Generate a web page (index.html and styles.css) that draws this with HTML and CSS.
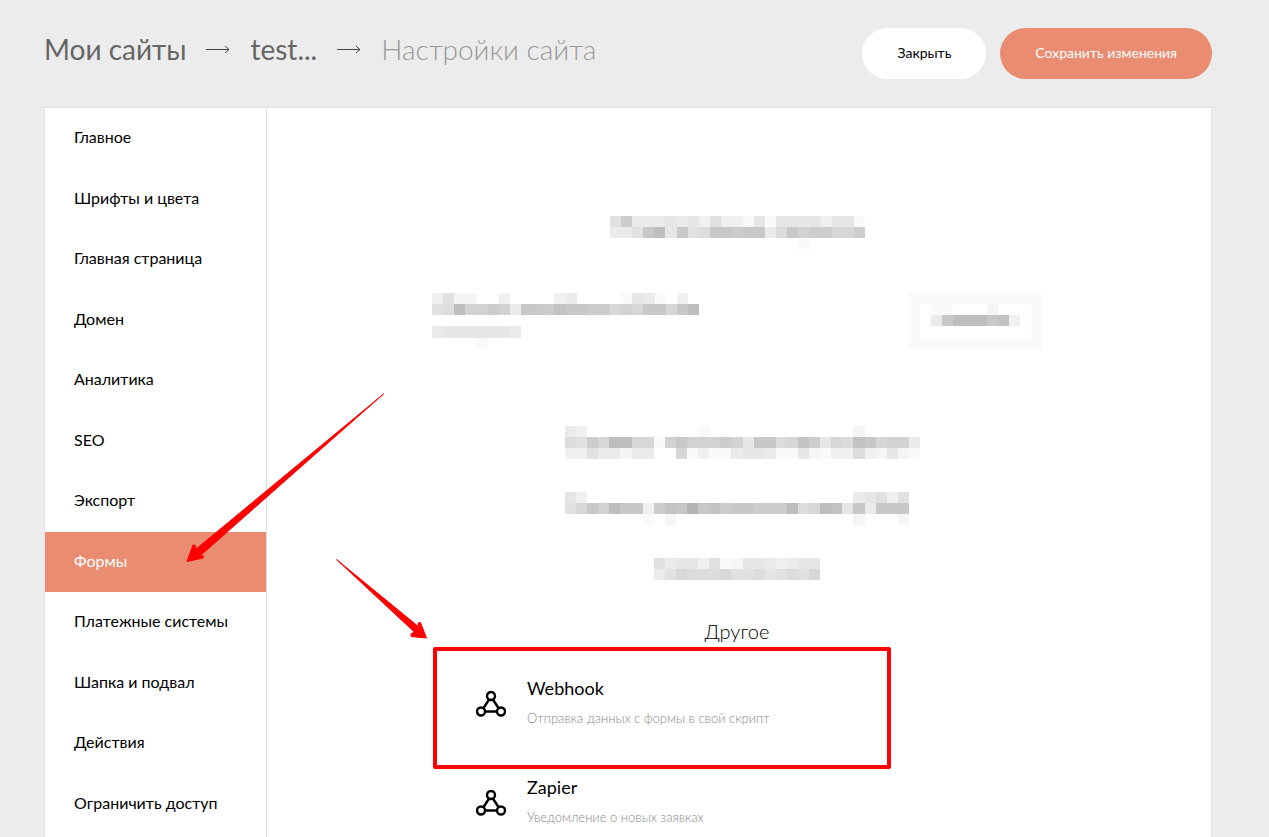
FILE: index.html
```html
<!DOCTYPE html>
<html lang="ru">
<head>
    <meta charset="UTF-8">
    <meta name="viewport" content="width=device-width, initial-scale=1.0">
    <title>Настройки сайта</title>
    <link rel="stylesheet" href="styles.css">
</head>
<body>
    <header class="header">
        <nav class="breadcrumbs">
            <a href="#">Мои сайты</a>
            <svg class="crumb-arrow" viewBox="0 0 24 10"><path d="M0 5.5H23M19 2L23 5.5L19 9"/></svg>
            <a href="#">test...</a>
            <svg class="crumb-arrow" viewBox="0 0 24 10"><path d="M0 5.5H23M19 2L23 5.5L19 9"/></svg>
            <span class="current">Настройки сайта</span>
        </nav>
        <div class="buttons">
            <button class="close" type="button">Закрыть</button>
            <button class="save" type="button">Сохранить изменения</button>
        </div>
    </header>

    <div class="card">
        <nav class="sidebar">
            <a href="#">Главное</a>
            <a href="#">Шрифты и цвета</a>
            <a href="#">Главная страница</a>
            <a href="#">Домен</a>
            <a href="#">Аналитика</a>
            <a href="#">SEO</a>
            <a href="#">Экспорт</a>
            <a href="#" class="active">Формы</a>
            <a href="#">Платежные системы</a>
            <a href="#">Шапка и подвал</a>
            <a href="#">Действия</a>
            <a href="#">Ограничить доступ</a>
        </nav>

        <main class="content">
            <svg class="mosaic mosaic-title" data-rows="6a444545363315155553551 446bd5b67bbabb47b9aa88a 00000000000000000100000"></svg>

            <div class="connected">
                <svg class="mosaic mosaic-name" data-rows="362200300003400001541030 67d99a94bbacbbaa898bb8bd 0 45555554 00001"></svg>
                <svg class="mosaic mosaic-button" data-rows="111111111111 101100020001 104bdddbc301 100000000001 111111111111"></svg>
            </div>

            <svg class="mosaic mosaic-text" data-rows="43000000000010000000000000200000 76a8dd8819b999a95bb78ca587cb8994 33644244008131145541152133732521"></svg>
            <svg class="mosaic mosaic-text" data-rows="53000000000000000000000000456360 68b9dbb3acbfbcabbaaad78dc5b4bbb0 00000001020000000000000000200020"></svg>
            <svg class="mosaic mosaic-small" data-rows="645536125543455 468777866756768"></svg>

            <h2>Другое</h2>
            <div class="service marked">
                <svg class="service-icon" viewBox="0 0 30 26"><path d="M12.8 9L7.2 17.5M17.2 9L22.8 17.5M9.5 20.5H20.5"/><circle cx="15" cy="5" r="4"/><circle cx="5" cy="20.5" r="4"/><circle cx="25" cy="20.5" r="4"/></svg>
                <div>
                    <h3>Webhook</h3>
                    <p>Отправка данных с формы в свой скрипт</p>
                </div>
            </div>
            <div class="service">
                <svg class="service-icon" viewBox="0 0 30 26"><path d="M12.8 9L7.2 17.5M17.2 9L22.8 17.5M9.5 20.5H20.5"/><circle cx="15" cy="5" r="4"/><circle cx="5" cy="20.5" r="4"/><circle cx="25" cy="20.5" r="4"/></svg>
                <div>
                    <h3>Zapier</h3>
                    <p>Уведомление о новых заявках</p>
                </div>
            </div>
        </main>

        <!-- красные стрелки-подсказки -->
        <svg class="pointers" viewBox="0 0 400 540">
            <path d="M338.5 286L155.5 447.5L158.5 448L158 450L142 453.5L148 437L150.5 437.5L150.5 441.5Z"/>
            <path d="M291.5 451.5L373.7 518.8L373 515L375.5 514.5L381.5 530L366 528.5L366 526L369.3 524Z"/>
        </svg>
    </div>

    <script src="script.js"></script>
</body>
</html>
```
FILE: styles.css
```css
* {
    box-sizing: border-box;
}

body {
    display: flex;
    flex-direction: column;
    min-height: 100vh;
    margin: 0;
    background-color: #ececec;
    color: #000;
    font-family: Lato, 'Open Sans', sans-serif;
}

a {
    color: inherit;
    text-decoration: none;
}

h2, h3, p {
    margin: 0;
    font-weight: 400;
}

.header {
    display: flex;
    justify-content: space-between;
    align-items: flex-start;
    height: 107px;
    padding: 28px 57px 0 44px;
}

.breadcrumbs {
    display: flex;
    align-items: center;
    gap: 20px;
    color: #666;
    font-size: 28px;
    line-height: 42px;
}

.breadcrumbs .current {
    color: #999;
    font-weight: 300;
}

.crumb-arrow {
    width: 24px;
    height: 10px;
    fill: none;
    stroke: #444;
}

.buttons {
    display: flex;
    gap: 14px;
}

.buttons button {
    height: 51px;
    padding: 0 35px 3px;
    border: none;
    border-radius: 26px;
    cursor: pointer;
    font-family: inherit;
    font-size: 14px;
}

.buttons .close {
    background-color: #fff;
    color: #000;
}

.buttons .save {
    background-color: #ea8c71;
    color: #fff;
}

.card {
    position: relative;
    display: flex;
    flex: 1;
    margin: 0 57px 0 44px;
    border: 1px solid #e2e2e2;
    border-bottom: none;
    background-color: #fff;
}

.sidebar {
    display: flex;
    flex-direction: column;
    width: 222px;
    padding-bottom: 3px;
    border-right: 1px solid #ddd;
    font-size: 16px;
}

.sidebar a {
    display: flex;
    flex: 1;
    align-items: center;
    padding: 0 0 3px 29px;
}

.sidebar .active {
    background-color: #ea8c71;
    color: #fff;
}

.content {
    display: flex;
    flex: 1;
    flex-direction: column;
    align-items: center;
    padding: 108px 4px 0 0;
}

.mosaic {
    display: block;
    shape-rendering: crispEdges;
}

.mosaic-title {
    width: 255px;
    margin-bottom: 44px;
}

.connected {
    display: flex;
    justify-content: space-between;
    width: 610px;
    margin-bottom: 77px;
}

.mosaic-name {
    width: 267px;
}

.mosaic-button {
    width: 133px;
}

.mosaic-text {
    width: 355px;
    margin: 0 0 33px 10px;
}

.mosaic-small {
    width: 166px;
    margin-bottom: 34px;
}

h2 {
    margin-bottom: 29px;
    font-size: 20px;
    font-weight: 300;
    line-height: 32px;
}

.service {
    position: relative;
    display: flex;
    gap: 21px;
    width: 610px;
    padding-left: 44px;
}

.service + .service {
    margin-top: 47px;
}

.service-icon {
    width: 30px;
    height: 26px;
    margin-top: 15px;
    fill: none;
    stroke: #000;
    stroke-width: 2.4;
}

.service h3 {
    margin-bottom: 8px;
    font-size: 18px;
    line-height: 24px;
}

.service p {
    color: #888;
    font-size: 13px;
    font-weight: 300;
    line-height: 20px;
}

.marked::before {
    content: "";
    position: absolute;
    top: -29px;
    left: 1px;
    width: 450px;
    height: 114px;
    border: 4px solid #f00;
    border-radius: 2px;
}

.pointers {
    position: absolute;
    top: 0;
    left: 0;
    width: 400px;
    height: 540px;
    fill: #f00;
    stroke: #f00;
    stroke-linejoin: round;
    pointer-events: none;
}
```
FILE: script.js
```js
// каждая цифра - оттенок серого в одной клетке, 0 - пусто
document.querySelectorAll('.mosaic').forEach(svg => {
    const rows = svg.dataset.rows.split(' ');
    const cols = rows[0].length;
    svg.setAttribute('viewBox', `0 0 ${cols} ${rows.length}`);

    rows.forEach((row, y) => {
        [...row].forEach((cell, x) => {
            const level = parseInt(cell, 36);
            if (level === 0) return;
            const gray = 255 - level * 5;
            const rect = document.createElementNS('http://www.w3.org/2000/svg', 'rect');
            rect.setAttribute('x', x);
            rect.setAttribute('y', y);
            rect.setAttribute('width', 1);
            rect.setAttribute('height', 1);
            rect.setAttribute('fill', `rgb(${gray}, ${gray}, ${gray})`);
            svg.appendChild(rect);
        });
    });
});
```
